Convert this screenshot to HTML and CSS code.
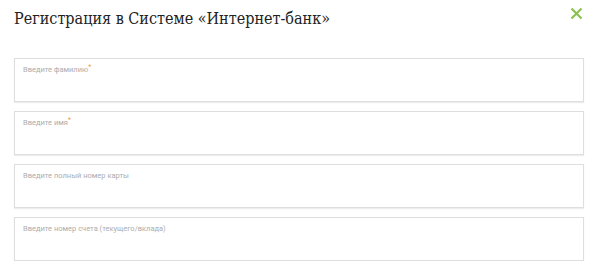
FILE: index.html
```html
<!DOCTYPE html>
<html lang="ru">
<head>
    <meta charset="utf-8">
    <title>Регистрация в Системе «Интернет-банк»</title>
    <link rel="stylesheet" href="styles.css">
</head>
<body>
    <div class="modal">
        <div class="head">
            <h2 class="title">Регистрация в Системе «Интернет-банк»</h2>
            <a class="close" href="#">
                <svg width="13" height="13" viewBox="0 0 13 13">
                    <path d="M1.5 1.5 L11.5 11.5 M11.5 1.5 L1.5 11.5" stroke="#8cc152" stroke-width="2.2" fill="none"/>
                </svg>
            </a>
        </div>
        <div class="fields">
            <div class="field"><span class="label">Введите фамилию<i class="req">*</i></span></div>
            <div class="field"><span class="label">Введите имя<i class="req">*</i></span></div>
            <div class="field"><span class="label">Введите полный номер карты</span></div>
            <div class="field"><span class="label">Введите номер счета (текущего/вклада)</span></div>
        </div>
    </div>
</body>
</html>
```
FILE: styles.css
```css
body {
    margin: 0;
    background: #fff;
}
.modal {
    padding: 0 16px 0 14px;
}
.head {
    display: flex;
    justify-content: space-between;
    align-items: flex-start;
    height: 58px;
}
.title {
    margin: 0;
    padding-top: 9px;
    font-family: "DejaVu Serif", serif;
    font-stretch: condensed;
    font-weight: normal;
    font-size: 16px;
    line-height: 20px;
    color: #222;
}
.close {
    display: block;
    margin: 7px 1px 0 0;
    width: 13px;
    height: 13px;
}
.close svg {
    display: block;
}
.fields {
    display: flex;
    flex-direction: column;
    gap: 9px;
}
.field {
    box-sizing: border-box;
    height: 44px;
    border: 1px solid #dedede;
    box-shadow: 0 1px 1px rgba(0,0,0,0.07);
    padding: 5px 8px 0 8px;
    font-family: Roboto, sans-serif;
    font-size: 7.5px;
    line-height: 11px;
}
.label {
    color: #adadad;
}
.req {
    font-style: normal;
    color: #f0a030;
    position: relative;
    top: -3px;
    font-size: 7px;
}
```
